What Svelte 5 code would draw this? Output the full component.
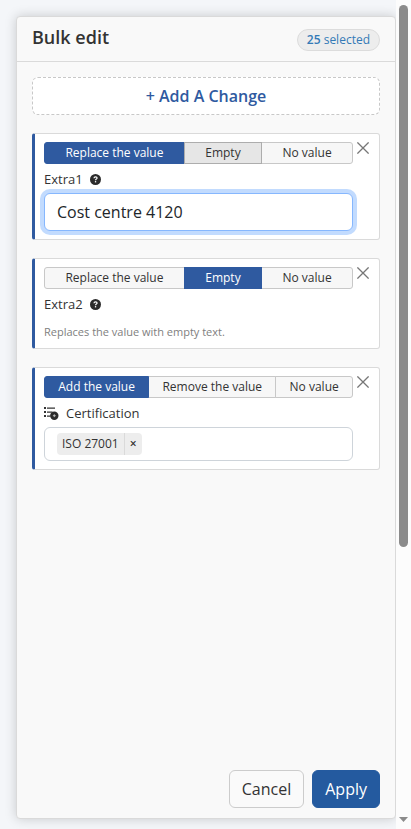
<script>
  // One entry per field being changed in the bulk edit
  let changes = $state([
    {
      id: "extra1",
      label: "Extra1",
      kind: "text",
      modes: ["Replace the value", "Empty", "No value"],
      mode: "Replace the value",
      value: "Cost centre 4120",
      hovered: "Empty",
    },
    {
      id: "extra2",
      label: "Extra2",
      kind: "text",
      modes: ["Replace the value", "Empty", "No value"],
      mode: "Empty",
      value: "",
    },
    {
      id: "certification",
      label: "Certification",
      kind: "tags",
      modes: ["Add the value", "Remove the value", "No value"],
      mode: "Add the value",
      tags: ["ISO 27001"],
    },
  ]);

  let selectedCount = 25;

  const removeChange = (id) => {
    changes = changes.filter((change) => change.id !== id);
  };

  const removeTag = (change, tag) => {
    change.tags = change.tags.filter((item) => item !== tag);
  };

  const addChange = () => {
    const number = changes.length + 1;
    changes.push({
      id: `extra${number}-${Date.now()}`,
      label: `Extra${number}`,
      kind: "text",
      modes: ["Replace the value", "Empty", "No value"],
      mode: "Replace the value",
      value: "",
    });
  };
</script>

<div class="page">
  <main class="panel">
    <header class="panel-header">
      <h1>Bulk edit</h1>
      <span class="badge"><b>{selectedCount}</b> selected</span>
    </header>

    <div class="panel-body">
      <button class="add-change" type="button" onclick={addChange}>+ Add A Change</button>

      {#each changes as change (change.id)}
        <section class="card">
          <div class="card-main">
            <div class="modes" role="group" aria-label={change.label}>
              {#each change.modes as mode (mode)}
                <button
                  type="button"
                  class="mode"
                  class:active={change.mode === mode}
                  class:hovered={change.hovered === mode && change.mode !== mode}
                  aria-pressed={change.mode === mode}
                  onclick={() => (change.mode = mode)}>{mode}</button
                >
              {/each}
            </div>

            <div class="field-label">
              {#if change.kind === "tags"}
                <svg class="list-icon" viewBox="0 0 15 13" aria-hidden="true">
                  <path
                    d="M0 0h2v2H0zM3 .4h8v1.300H3zM0 4h2v2H0zM3 4.400h5.500v1.300H3zM0 8h2v2H0zM3 8.400h3.500v1.300H3z"
                    fill="#333"
                  />
                  <circle cx="10.300" cy="8.700" r="4.200" fill="#2b2b2b" />
                  <path d="M10.300 7.300v2.800M8.900 8.700h2.800" stroke="#bbb" stroke-width="1" />
                </svg>
              {/if}
              <label for={change.id}>{change.label}</label>
              {#if change.kind === "text"}
                <svg class="help-icon" viewBox="0 0 11 11" aria-hidden="true">
                  <circle cx="5.500" cy="5.500" r="5.500" fill="#2b2b2b" />
                  <path
                    d="M4 4.300c0-1 .7-1.500 1.600-1.500s1.500.5 1.500 1.300c0 1-1.500 1-1.500 2.100"
                    fill="none"
                    stroke="#fff"
                    stroke-width="1.200"
                  />
                  <rect x="4.900" y="7.100" width="1.300" height="1.300" fill="#fff" />
                </svg>
              {/if}
            </div>

            {#if change.kind === "tags"}
              <div class="tag-box">
                {#each change.tags as tag (tag)}
                  <span class="tag">
                    <span class="tag-text">{tag}</span>
                    <button
                      type="button"
                      class="tag-remove"
                      aria-label="Remove {tag}"
                      onclick={() => removeTag(change, tag)}>×</button
                    >
                  </span>
                {/each}
                <input id={change.id} class="tag-input" type="text" />
              </div>
            {:else if change.mode === "Replace the value"}
              <input
                id={change.id}
                class="text-input"
                class:focused={change.id === "extra1"}
                type="text"
                bind:value={change.value}
              />
            {:else}
              <p class="hint">
                {change.mode === "Empty"
                  ? "Replaces the value with empty text."
                  : "Removes the value."}
              </p>
            {/if}
          </div>

          <button
            type="button"
            class="close"
            aria-label="Remove {change.label}"
            onclick={() => removeChange(change.id)}
          >
            <svg viewBox="0 0 12 12" aria-hidden="true">
              <path d="M.4.4l11.200 11.200M11.600.4L.4 11.600" stroke="#777" stroke-width="1.300" />
            </svg>
          </button>
        </section>
      {/each}
    </div>

    <footer class="panel-footer">
      <button class="btn" type="button">Cancel</button>
      <button class="btn primary" type="button">Apply</button>
    </footer>
  </main>

  <div class="scrollbar" aria-hidden="true">
    <div class="thumb"></div>
    <svg class="arrow" viewBox="0 0 9 5"><path d="M0 0h9L4.500 5z" fill="#8b8b8b" /></svg>
  </div>
</div>

<style>
  :global(body) {
    background: #f4f6f9;
  }

  .page {
    display: flex;
    height: 100vh;
    box-sizing: border-box;
    padding-left: 16px;
    color: #333;
    font-family: "Open Sans", "Noto Sans", sans-serif;
    font-size: 13px;
  }

  .page *,
  .page *::before {
    box-sizing: border-box;
  }

  button,
  input {
    font-family: inherit;
    color: inherit;
  }

  button {
    cursor: pointer;
  }

  .panel {
    flex: 1;
    min-width: 0;
    display: flex;
    flex-direction: column;
    margin: 16px 0 10px;
    border: 1px solid #dadada;
    border-radius: 4px;
    background: #f9f9f9;
    box-shadow: 0 0 12px rgba(0, 0, 0, 0.18);
  }

  .panel-header {
    display: flex;
    align-items: center;
    justify-content: space-between;
    height: 45px;
    padding: 0 15px;
    border-bottom: 1px solid #dadada;
  }

  h1 {
    margin: 0;
    font-size: 18px;
    line-height: 24px;
    font-weight: 600;
    padding-bottom: 4px;
  }

  .badge {
    margin-top: 2px;
    padding: 0 9px;
    border: 1px solid #dcdcdc;
    border-radius: 11px;
    background: #ededed;
    color: #337ab7;
    font-size: 12px;
    line-height: 20px;
  }

  .badge b {
    font-weight: 600;
  }

  .panel-body {
    flex: 1;
    min-height: 0;
    display: flex;
    flex-direction: column;
    padding: 15px;
  }

  .add-change {
    height: 38px;
    flex: none;
    border: 1px dashed #c8c8c8;
    border-radius: 6px;
    background: #fff;
    color: #2f5aa0;
    font-size: 16px;
    font-weight: 600;
  }

  .card {
    display: flex;
    margin-top: 18px;
    padding: 8px 10px 8px 9px;
    border: 1px solid #dadada;
    border-left: 3px solid #2f5aa0;
    border-radius: 3px;
    background: #fff;
  }

  .card-main {
    flex: 1;
    min-width: 0;
  }

  .modes {
    display: flex;
  }

  .mode {
    flex: 1 1 auto;
    height: 22px;
    padding: 0;
    border: 1px solid #c8c8c8;
    background: #f7f7f7;
    font-size: 12px;
    line-height: 20px;
    white-space: nowrap;
  }

  .mode + .mode {
    margin-left: -1px;
  }

  .mode:first-child {
    border-radius: 3px 0 0 3px;
  }

  .mode:last-child {
    border-radius: 0 3px 3px 0;
  }

  .mode.hovered,
  .mode:hover {
    z-index: 1;
    border-color: #adadad;
    background: #e6e6e6;
  }

  .mode.active {
    z-index: 1;
    border-color: #2f5aa0;
    background: #2f5aa0;
    color: #fff;
  }

  .field-label {
    display: flex;
    align-items: center;
    gap: 7px;
    height: 29px;
    font-size: 13px;
    line-height: 18px;
  }

  .help-icon {
    width: 11px;
    height: 11px;
    margin-top: 2px;
  }

  .list-icon {
    width: 15px;
    height: 13px;
    margin-top: 2px;
  }

  .text-input {
    display: block;
    width: 100%;
    height: 38px;
    padding: 0 12px;
    border: 1px solid #c8ced5;
    border-radius: 6px;
    background: #fff;
    color: #212529;
    font-size: 16px;
    outline: none;
  }

  .text-input.focused,
  .text-input:focus {
    border-color: #86b7fe;
    box-shadow: 0 0 0 4px rgba(13, 110, 253, 0.25);
  }

  .hint {
    margin: 6px 0 0;
    color: #808080;
    font-size: 11px;
    line-height: 16px;
  }

  .tag-box {
    display: flex;
    align-items: center;
    height: 34px;
    padding: 0 12px;
    border: 1px solid #ced4da;
    border-radius: 6px;
  }

  .tag {
    display: flex;
    height: 22px;
    border-radius: 4px;
    background: #ededed;
    font-size: 12px;
    line-height: 22px;
  }

  .tag-text {
    padding: 0 5px;
  }

  .tag-remove {
    width: 18px;
    padding: 0;
    border: 0;
    border-left: 1px solid #dadada;
    background: none;
    font-size: 12px;
    font-weight: 600;
    line-height: 20px;
  }

  .tag-input {
    flex: 1;
    min-width: 0;
    border: 0;
    background: none;
    outline: none;
  }

  .close {
    flex: none;
    display: flex;
    align-self: flex-start;
    margin-left: 4px;
    padding: 0;
    border: 0;
    background: none;
  }

  .close svg {
    width: 12px;
    height: 12px;
  }

  .panel-footer {
    display: flex;
    justify-content: flex-end;
    gap: 8px;
    padding: 10px 15px;
  }

  .btn {
    height: 38px;
    padding: 0 12px;
    border: 1px solid #ccc;
    border-radius: 6px;
    background: #fafafa;
    font-size: 16px;
  }

  .btn.primary {
    border-color: #245a9f;
    background: #245a9f;
    color: #fff;
  }

  .scrollbar {
    z-index: 1;
    width: 15px;
    display: flex;
    flex-direction: column;
    align-items: center;
    justify-content: space-between;
    padding: 5px 0 7px;
    background: #fcfcfc;
  }

  .thumb {
    width: 9px;
    height: calc(66% + 3px);
    border-radius: 5px;
    background: #8b8b8b;
  }

  .arrow {
    width: 9px;
    height: 5px;
  }
</style>
